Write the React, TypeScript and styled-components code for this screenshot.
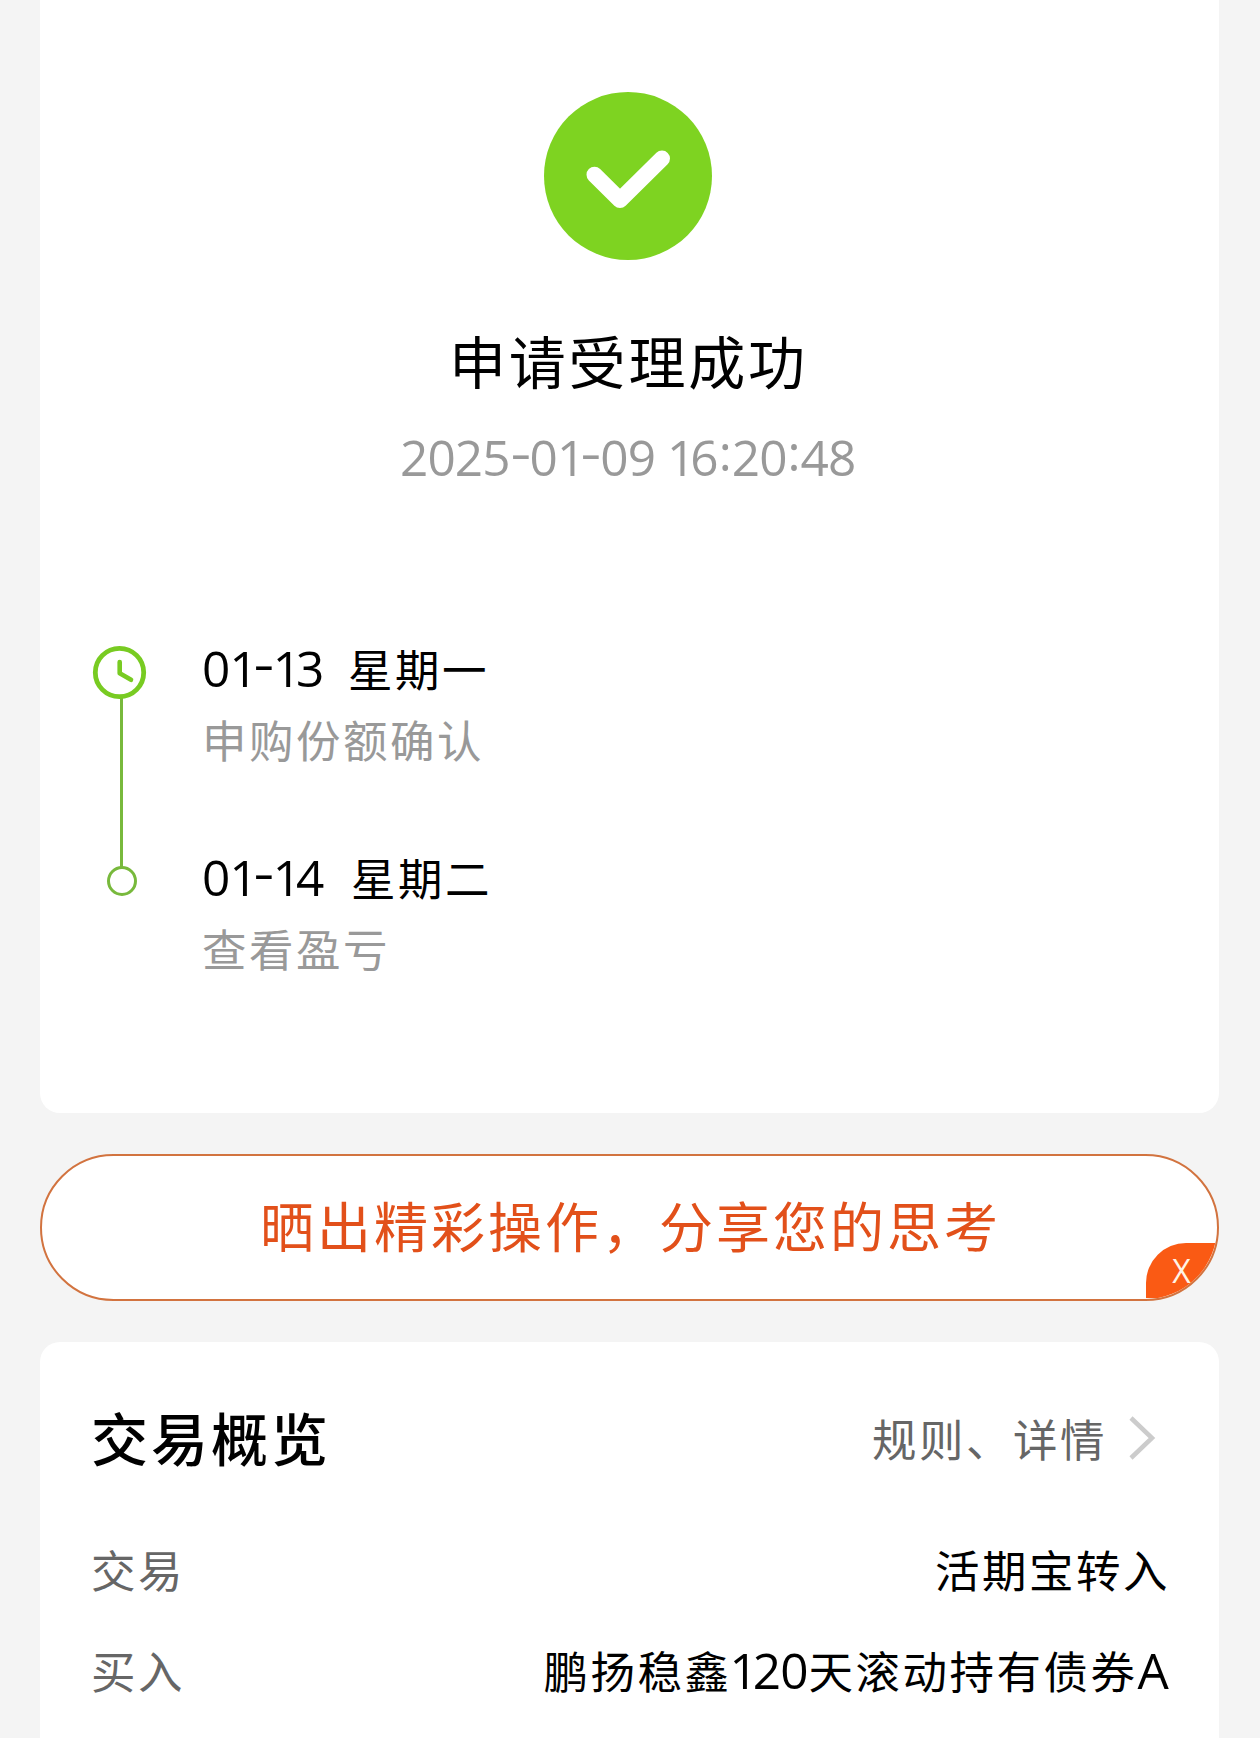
import React from "react";
import styled, { createGlobalStyle } from "styled-components";

const GlobalStyle = createGlobalStyle`
  *, *::before, *::after { box-sizing: border-box; }
  body {
    margin: 0;
    background: #f4f4f4;
    color: #000;
    font-family: "Noto Sans CJK SC", sans-serif;
  }
`;

const Page = styled.main`
  width: 1260px;
  height: 1738px;
  padding: 0 41px 0 40px;
  overflow: hidden;
  display: flex;
  flex-direction: column;
  background: #f4f4f4;
`;

const ResultCard = styled.section`
  height: 1113px;
  flex: none;
  padding-top: 92px;
  background: #fff;
  border-radius: 0 0 20px 20px;
  display: flex;
  flex-direction: column;
`;

const SuccessIcon = styled.svg`
  width: 168px;
  height: 168px;
  margin-left: 504px;
  flex: none;
`;

const Title = styled.h1`
  margin: 67px 0 0;
  height: 64px;
  line-height: 65px;
  padding-left: 409px;
  font-size: 57px;
  font-weight: 400;
  letter-spacing: 2.8px;
  white-space: nowrap;
`;

const Latin = styled.span<{ $pull?: number; $end?: number }>`
  font-family: "Open Sans", "Noto Sans", sans-serif;
  font-size: 49.5px;
  line-height: 1;
  letter-spacing: -0.9px;
  margin-left: ${(p) => -(p.$pull ?? 0)}px;
  margin-right: ${(p) => p.$end ?? 0}px;
`;

const NarrowOne = styled.span`
  letter-spacing: -5px;
`;

const WideDash = styled.span`
  display: inline-block;
  margin: 0 1px 0 3px;
  letter-spacing: 0;
  transform: translateY(-5px) scaleX(1.3);
`;

const RaisedColon = styled.span`
  display: inline-block;
  margin-left: 1px;
  letter-spacing: 0;
  transform: translateY(-5px);
`;

const Timestamp = styled.div`
  height: 60px;
  margin-top: 42px;
  padding-left: 360px;
  line-height: 60px;
  color: #999;
  white-space: nowrap;
`;

const Timeline = styled.div`
  display: grid;
  grid-template-columns: 56px 1fr;
  column-gap: 55px;
  margin: 145px 0 0 51px;
`;

const Track = styled.svg`
  width: 56px;
  height: 260px;
  margin-top: 6px;
`;

const Steps = styled.div`
  display: flex;
  flex-direction: column;
  gap: 78px;
`;

const Step = styled.div`
  height: 131px;
`;

const StepDate = styled.div`
  height: 60px;
  line-height: 60px;
  display: flex;
  align-items: baseline;
  font-size: 44.5px;
  letter-spacing: 2.5px;
  white-space: nowrap;
`;

const StepDay = styled.span<{ $width: number }>`
  flex: none;
  width: ${(p) => p.$width}px;
`;

const StepNote = styled.div`
  height: 60px;
  margin-top: 11px;
  line-height: 60px;
  font-size: 44.5px;
  letter-spacing: 2.5px;
  color: #999;
  white-space: nowrap;
`;

const ShareBanner = styled.div`
  position: relative;
  flex: none;
  height: 147px;
  margin-top: 41px;
  padding-left: 218px;
  border: 2px solid #d2733f;
  border-radius: 74px;
  background: #fff;
  overflow: hidden;
  color: #e2501a;
  font-size: 54px;
  line-height: 138px;
  letter-spacing: 3px;
  white-space: nowrap;
`;

const CloseTab = styled.button`
  position: absolute;
  right: 0;
  bottom: 1px;
  width: 71px;
  height: 55px;
  padding: 0;
  border: 0;
  border-radius: 40px 0 0 0;
  background: #fa5a14;
  color: #fff3e6;
  font: 32px/56px "Open Sans", sans-serif;
  text-align: center;
`;

const OverviewCard = styled.section`
  flex: none;
  height: 420px;
  margin-top: 41px;
  padding: 56px 49px 0 51px;
  background: #fff;
  border-radius: 20px;
`;

const OverviewHead = styled.div`
  display: flex;
  align-items: center;
  justify-content: space-between;
  height: 80px;
`;

const OverviewTitle = styled.h2`
  margin: 0;
  padding-bottom: 4px;
  line-height: 76px;
  font-size: 57px;
  font-weight: 500;
  letter-spacing: 3px;
`;

const DetailLink = styled.a`
  display: flex;
  align-items: center;
  color: #666;
  font-size: 44.5px;
  line-height: 80px;
  letter-spacing: 2.5px;
`;

const Chevron = styled.svg`
  width: 28px;
  height: 46px;
  margin: 0 14px 0 21px;
`;

const Rows = styled.div`
  padding-top: 40px;
`;

const Row = styled.div`
  display: flex;
  align-items: center;
  justify-content: space-between;
  height: 101px;
  font-size: 44.5px;
  letter-spacing: 2.5px;
  white-space: nowrap;
`;

const RowLabel = styled.span`
  color: #666;
`;

const RowValue = styled.span`
  color: #000;
`;

function Numeral({ text, pull, end }: { text: string; pull?: number; end?: number }) {
  return (
    <Latin $pull={pull} $end={end}>
      {text.split("").map((c, i) => {
        if (c === "1") return <NarrowOne key={i}>{c}</NarrowOne>;
        if (c === "-") return <WideDash key={i}>{c}</WideDash>;
        if (c === ":") return <RaisedColon key={i}>{c}</RaisedColon>;
        return c;
      })}
    </Latin>
  );
}

const steps = [
  { date: "01-13", day: "星期一", note: "申购份额确认", width: 146 },
  { date: "01-14", day: "星期二", note: "查看盈亏", width: 149 },
];

export default function App() {
  return (
    <Page>
      <GlobalStyle />
      <ResultCard>
        <SuccessIcon viewBox="0 0 168 168" fill="none">
          <circle cx="84" cy="84" r="84" fill="#7ed321" />
          <path d="M50.5 82.7 76 108l42-41.5" stroke="#fff" strokeWidth="16" strokeLinecap="round" strokeLinejoin="round" />
        </SuccessIcon>
        <Title>申请受理成功</Title>
        <Timestamp>
          <Numeral text="2025-01-09 16:20:48" />
        </Timestamp>
        <Timeline>
          <Track viewBox="0 0 56 260" fill="none">
            <path d="M30.5 53v170" stroke="#78b93c" strokeWidth="3" />
            <circle cx="28.5" cy="28.5" r="24.2" stroke="#78cb22" strokeWidth="4.8" />
            <path d="M28.7 18v11.3l11.3 6.5" stroke="#78cb22" strokeWidth="4.6" strokeLinecap="round" strokeLinejoin="round" />
            <circle cx="31" cy="237" r="13.5" stroke="#78b93c" strokeWidth="3" />
          </Track>
          <Steps>
            {steps.map((s) => (
              <Step key={s.date}>
                <StepDate>
                  <StepDay $width={s.width}>
                    <Numeral text={s.date} />
                  </StepDay>
                  <span>{s.day}</span>
                </StepDate>
                <StepNote>{s.note}</StepNote>
              </Step>
            ))}
          </Steps>
        </Timeline>
      </ResultCard>
      <ShareBanner>
        晒出精彩操作，分享您的思考
        <CloseTab>X</CloseTab>
      </ShareBanner>
      <OverviewCard>
        <OverviewHead>
          <OverviewTitle>交易概览</OverviewTitle>
          <DetailLink>
            规则、详情
            <Chevron viewBox="0 0 28 46" fill="none">
              <path d="M3 3l21 20L3 43" stroke="#ccc" strokeWidth="4.5" />
            </Chevron>
          </DetailLink>
        </OverviewHead>
        <Rows>
          <Row>
            <RowLabel>交易</RowLabel>
            <RowValue>活期宝转入</RowValue>
          </Row>
          <Row>
            <RowLabel>买入</RowLabel>
            <RowValue>
              鹏扬稳鑫
              <Numeral text="120" pull={2} end={1} />
              天滚动持有债券
              <Latin $end={2}>A</Latin>
            </RowValue>
          </Row>
        </Rows>
      </OverviewCard>
    </Page>
  );
}
